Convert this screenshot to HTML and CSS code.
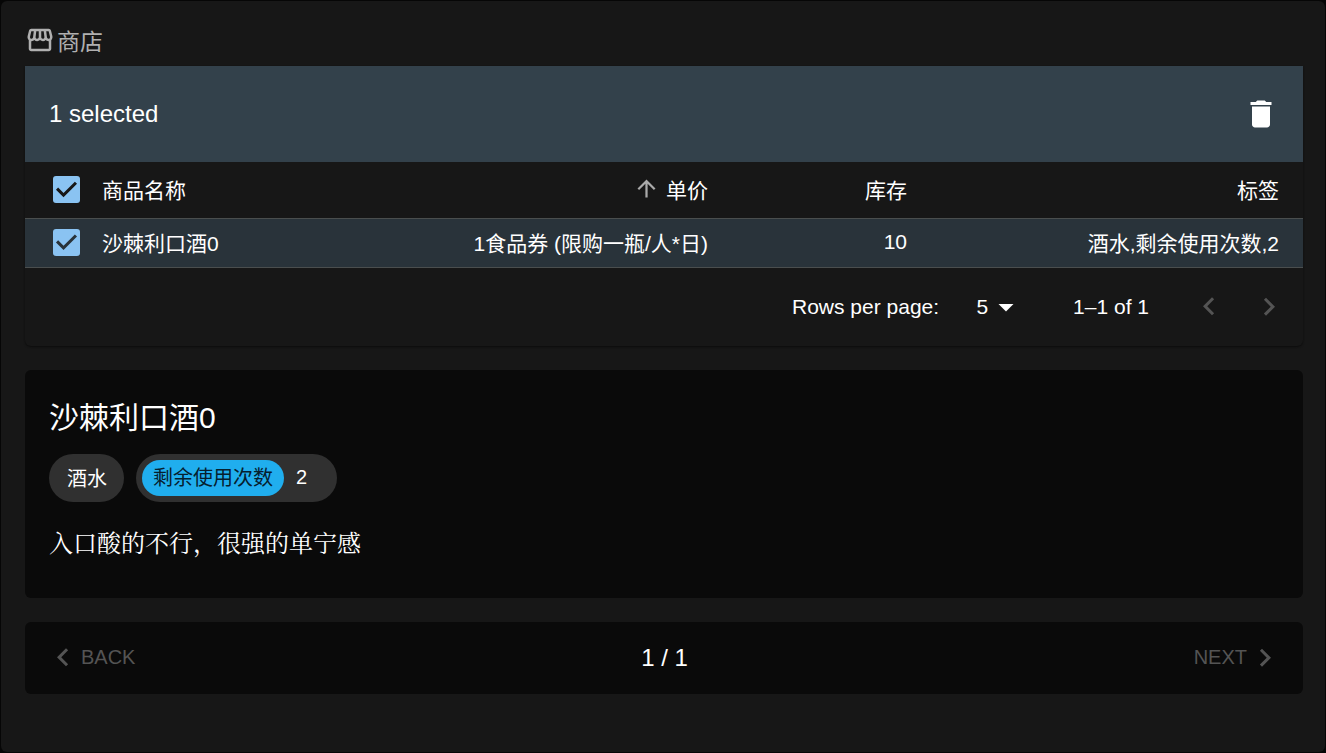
FILE: index.html
```html
<!DOCTYPE html>
<html lang="zh-CN">
<head>
    <meta charset="UTF-8">
    <meta name="viewport" content="width=device-width, initial-scale=1.0">
    <title>商店</title>
    <link rel="stylesheet" href="styles.css">
</head>
<body>
    <main class="shop">
        <h1 class="shop-title">
            <svg class="icon" viewBox="0 0 24 24"><path d="M21.9 8.89l-1.05-4.37c-.22-.9-1-1.52-1.91-1.52H5.05c-.9 0-1.69.63-1.9 1.52L2.1 8.89c-.24 1.02-.02 2.06.62 2.88.08.11.19.19.28.29V19c0 1.1.9 2 2 2h14c1.1 0 2-.9 2-2v-6.94c.09-.09.2-.18.28-.28.64-.82.87-1.87.62-2.89zm-2.99-3.9l1.05 4.37c.1.42.01.84-.25 1.17-.14.18-.44.47-.94.47-.61 0-1.14-.49-1.21-1.14L16.98 5l1.93-.01zM13 5h1.96l.54 4.52c.05.39-.07.78-.33 1.07-.22.26-.54.41-.95.41-.67 0-1.22-.59-1.22-1.31V5zM8.49 9.52L9.04 5H11v4.69c0 .72-.55 1.31-1.29 1.31-.34 0-.65-.15-.89-.41-.25-.29-.37-.68-.33-1.07zm-4.45-.16L5.05 5h1.97l-.58 4.86c-.08.65-.6 1.14-1.21 1.14-.49 0-.8-.29-.93-.47-.27-.32-.36-.75-.26-1.17zM5 19v-6.03c.08.01.15.03.23.03.87 0 1.66-.36 2.24-.95.6.6 1.4.95 2.31.95.87 0 1.65-.36 2.23-.93.59.57 1.39.93 2.29.93.84 0 1.64-.35 2.24-.95.58.59 1.37.95 2.24.95.08 0 .15-.02.23-.03V19H5z"/></svg>
            商店
        </h1>

        <section class="goods">
            <div class="toolbar">
                <span>1 selected</span>
                <button type="button" class="delete" aria-label="Delete">
                    <svg class="icon" viewBox="0 0 24 24"><path d="M6 19c0 1.1.9 2 2 2h8c1.1 0 2-.9 2-2V7H6v12zM19 4h-3.5l-1-1h-5l-1 1H5v2h14V4z"/></svg>
                </button>
            </div>

            <table>
                <thead>
                    <tr>
                        <th class="col-check"><input type="checkbox" aria-label="Select all" checked></th>
                        <th class="col-name">商品名称</th>
                        <th class="col-price">
                            <button type="button" class="sort">
                                <svg class="icon" viewBox="0 0 24 24"><path d="M4 12l1.41 1.41L11 7.83V20h2V7.83l5.58 5.59L20 12l-8-8-8 8z"/></svg>
                                单价
                            </button>
                        </th>
                        <th class="col-stock">库存</th>
                        <th class="col-tags">标签</th>
                    </tr>
                </thead>
                <tbody>
                    <tr class="selected">
                        <td class="col-check"><input type="checkbox" id="item-0" checked></td>
                        <td class="col-name"><label for="item-0">沙棘利口酒0</label></td>
                        <td>1食品券 (限购一瓶/人*日)</td>
                        <td>10</td>
                        <td>酒水,剩余使用次数,2</td>
                    </tr>
                </tbody>
            </table>

            <div class="pagination">
                <label for="rows">Rows per page:</label>
                <div class="rows-select">
                    <select id="rows">
                        <option selected>5</option>
                        <option>10</option>
                        <option>25</option>
                    </select>
                    <svg class="icon" viewBox="0 0 24 24"><path d="M7 10l5 5 5-5z"/></svg>
                </div>
                <span class="range">1–1 of 1</span>
                <button type="button" class="page-button" aria-label="Previous page" disabled>
                    <svg class="icon" viewBox="0 0 24 24"><path d="M15.41 16.09l-4.58-4.59 4.58-4.59L14 5.5l-6 6 6 6z"/></svg>
                </button>
                <button type="button" class="page-button" aria-label="Next page" disabled>
                    <svg class="icon" viewBox="0 0 24 24"><path d="M8.59 16.34l4.58-4.59-4.58-4.59L10 5.75l6 6-6 6z"/></svg>
                </button>
            </div>
        </section>

        <section class="card detail">
            <h2>沙棘利口酒0</h2>
            <div class="chips">
                <span class="chip">酒水</span>
                <span class="chip chip-counter"><span class="chip-label">剩余使用次数</span>2</span>
            </div>
            <p>入口酸的不行，很强的单宁感</p>
        </section>

        <nav class="card stepper">
            <button type="button" disabled>
                <svg class="icon" viewBox="0 0 24 24"><path d="M15.41 16.09l-4.58-4.59 4.58-4.59L14 5.5l-6 6 6 6z"/></svg>
                BACK
            </button>
            <span>1 / 1</span>
            <button type="button" disabled>
                NEXT
                <svg class="icon" viewBox="0 0 24 24"><path d="M8.59 16.34l4.58-4.59-4.58-4.59L10 5.75l6 6-6 6z"/></svg>
            </button>
        </nav>
    </main>
</body>
</html>
```
FILE: styles.css
```css
* {
    box-sizing: border-box;
}
body {
    margin: 0;
    padding: 1px;
    min-height: 100vh;
    display: flex;
    background-color: #060606;
    color: #fff;
    font-family: "Liberation Sans", "Noto Sans CJK SC", sans-serif;
    font-size: 21px;
}
button, select {
    padding: 0;
    border: none;
    background: none;
    color: inherit;
    font: inherit;
    cursor: pointer;
}
button:disabled {
    color: #545454;
    cursor: default;
}
.icon {
    display: block;
    flex: none;
    width: 36px;
    height: 36px;
    fill: currentColor;
}
.shop {
    flex: 1;
    padding: 24px 22px 24px 24px;
    border-radius: 6px;
    background-color: #171717;
}
.shop-title {
    display: flex;
    align-items: center;
    gap: 2px;
    height: 30px;
    margin: 0 0 11px;
    color: #b0b0b0;
    font-size: 23px;
    font-weight: normal;
}
.shop-title .icon {
    width: 30px;
    height: 30px;
}

/* Goods table */
.goods {
    margin-bottom: 24px;
    border-radius: 0 0 6px 6px;
    box-shadow: 0 1px 2px #0c0c0c;
}
.toolbar {
    display: flex;
    align-items: center;
    justify-content: space-between;
    height: 96px;
    padding: 0 24px;
    background-color: #33414b;
    font-size: 24px;
}
table {
    width: 100%;
    table-layout: fixed;
    border-collapse: collapse;
}
th, td {
    height: 49px;
    padding: 0 24px 2px 0;
    border-bottom: 1px solid #4a4e4e;
    font-weight: normal;
    text-align: right;
    white-space: nowrap;
}
th {
    height: 56px;
}
.selected {
    background-color: #29333a;
}
.col-check {
    width: 77px;
    padding: 0 0 0 28px;
    text-align: left;
}
.col-name {
    padding: 0 0 2px;
    text-align: left;
}
.col-stock {
    width: 199px;
}
.col-tags {
    width: 372px;
}
input[type="checkbox"] {
    appearance: none;
    display: block;
    width: 27px;
    height: 27px;
    margin: 0;
    border-radius: 3px;
    background-color: #8ac3f2;
    color: #171717;
}
.selected input[type="checkbox"] {
    color: #29333a;
}
input[type="checkbox"]:checked::before {
    content: "";
    display: block;
    height: 100%;
    background-color: currentColor;
    clip-path: polygon(39% 78%, 11% 50%, 19% 42%, 39% 62%, 81% 20%, 89% 28%);
}
.sort {
    display: inline-flex;
    align-items: center;
    gap: 6px;
    vertical-align: middle;
}
.sort .icon {
    width: 27px;
    height: 27px;
    color: #aaa;
}

/* Pagination */
.pagination {
    display: flex;
    align-items: center;
    justify-content: flex-end;
    height: 78px;
    padding-right: 4px;
}
.rows-select {
    position: relative;
    margin: 0 49px 0 13px;
}
.rows-select select {
    appearance: none;
    display: block;
    width: 72px;
    height: 36px;
    padding-right: 36px;
    text-align-last: right;
}
.rows-select .icon {
    position: absolute;
    top: 0;
    right: 0;
    pointer-events: none;
}
.range {
    margin-right: 30px;
}
.page-button {
    padding: 12px;
}

/* Cards */
.card {
    border-radius: 6px;
    background-color: #0a0a0a;
}
.detail {
    margin-bottom: 24px;
    padding: 24px 24px 36px;
}
.detail h2 {
    margin: 0 0 12px;
    font-size: 30px;
    font-weight: normal;
    line-height: 48px;
}
.detail p {
    margin: 22px 0 2px;
    font-family: "Noto Serif CJK SC", "Noto Sans CJK SC", serif;
    font-size: 24px;
    line-height: 36px;
}
.chips {
    display: flex;
    gap: 12px;
}
.chip {
    display: flex;
    align-items: center;
    height: 48px;
    padding: 0 17px 0 18px;
    border-radius: 24px;
    background-color: #303030;
    font-size: 20px;
}
.chip-counter {
    gap: 12px;
    padding: 0 30px 0 6px;
}
.chip-label {
    padding: 0 11px;
    border-radius: 18px;
    background-color: #20aeee;
    color: #06202e;
    line-height: 36px;
}
.stepper {
    display: flex;
    align-items: center;
    justify-content: space-between;
    height: 72px;
    padding: 0 20px;
    font-size: 24px;
}
.stepper button {
    display: flex;
    align-items: center;
    font-size: 20px;
}
```
